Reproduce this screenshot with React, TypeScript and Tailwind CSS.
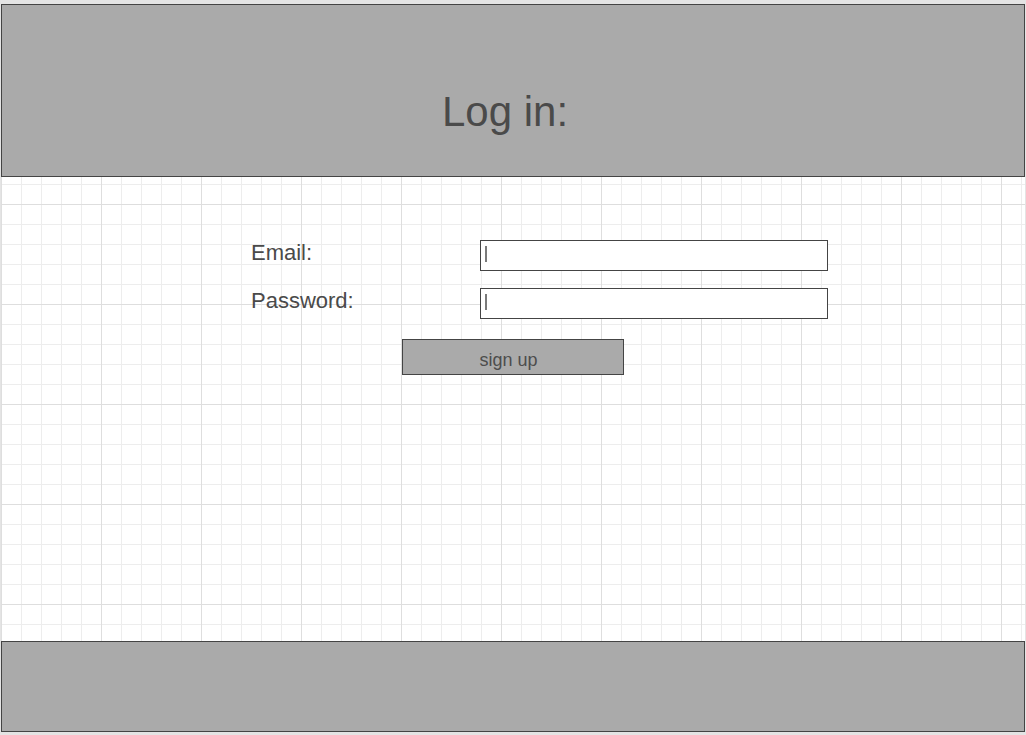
export default function App() {
  return (
    <div className="h-[735px] w-full bg-[#e4e4e4] pl-px pt-1 font-['Liberation_Sans',Arial,sans-serif] text-[#4a4a4a]">
      <div className="flex h-[728px] w-[1024px] flex-col bg-white bg-[linear-gradient(to_right,#dedede_1px,transparent_1px),linear-gradient(to_bottom,#dedede_1px,transparent_1px),linear-gradient(to_right,#ededed_1px,transparent_1px),linear-gradient(to_bottom,#ededed_1px,transparent_1px)] bg-[size:100px_100px,100px_100px,20px_20px,20px_20px]">
        {/* Header */}
        <header className="h-[173px] border border-[#444] bg-[#aaaaaa] pl-[440px] pt-[83px]">
          <h1 className="text-[42px] leading-[48px]">Log in:</h1>
        </header>

        {/* Form */}
        <main className="flex-1 pt-[63px]">
          <div className="flex flex-col gap-[17px] pl-[250px]">
            <div className="flex items-start">
              <label className="w-[229px] text-[22px] leading-[25px]">Email:</label>
              <div className="h-[31px] w-[348px] border border-[#444] bg-white pl-[4px] pt-[5px]">
                <div className="h-[16px] w-[2px] bg-[#7a7a7a]" />
              </div>
            </div>
            <div className="flex items-start">
              <label className="w-[229px] text-[22px] leading-[25px]">Password:</label>
              <div className="h-[31px] w-[348px] border border-[#444] bg-white pl-[4px] pt-[5px]">
                <div className="h-[16px] w-[2px] bg-[#7a7a7a]" />
              </div>
            </div>
          </div>
          <div className="pl-[401px] pt-[20px]">
            <button className="h-[36px] w-[222px] border border-[#444] bg-[#aaaaaa] pr-[9px] pt-[5px] text-[18px] leading-[30px] text-[#4d4d4d]">
              sign up
            </button>
          </div>
        </main>

        {/* Footer */}
        <footer className="h-[91px] border border-[#444] bg-[#aaaaaa]" />
      </div>
    </div>
  );
}
